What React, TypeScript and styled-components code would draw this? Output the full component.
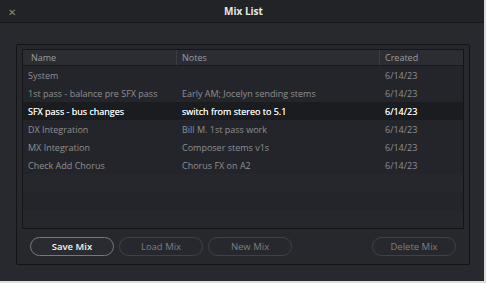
import React from 'react'
import styled, {createGlobalStyle} from 'styled-components'

const Global = createGlobalStyle`
  body {
    margin: 0;
    background: #dcdcdc;
    font-family: "Open Sans", "Noto Sans", sans-serif;
  }
`

const Window = styled.div`
  width: 484px;
  height: 281px;
  background: #28292e;
  display: flex;
  flex-direction: column;
  box-sizing: border-box;
`

const TitleBar = styled.div`
  height: 22px;
  flex: none;
  background: #222327;
  border-bottom: 1px solid #18191c;
  display: flex;
  align-items: center;
  justify-content: center;
  position: relative;
  color: #e6e6e6;
  font-size: 10px;
  font-weight: 700;
  padding-left: 3px;
`

const Close = styled.span`
  position: absolute;
  left: 8px;
  top: 5px;
  color: #8a8a8e;
  font-size: 10px;
  font-weight: 400;
`

const Body = styled.div`
  padding: 21px 14px 16px 16px;
  flex: 1;
`

const Panel = styled.div`
  width: 454px;
  height: 221px;
  box-sizing: border-box;
  border: 1px solid #131416;
  border-radius: 2px;
  background: #27282d;
  padding: 4px 5px 0 5px;
  display: flex;
  flex-direction: column;
`

const Table = styled.div`
  height: 180px;
  box-sizing: border-box;
  border: 1px solid #141517;
  background: #24252a;
  display: flex;
  flex-direction: column;
  overflow: hidden;
`

const Header = styled.div`
  display: grid;
  grid-template-columns: 153px 203px 1fr;
  height: 15px;
  background: #2c2d32;
  border-bottom: 1px solid #18191b;
  flex: none;
`

const HeadCell = styled.div<{first?: boolean}>`
  font-size: 9px;
  color: #9c9ca0;
  padding-left: ${(p) => (p.first ? 8 : 5)}px;
  line-height: 15px;
  border-left: ${(p) => (p.first ? 'none' : '1px solid #3c3d42')};
`

const Row = styled.div<{selected?: boolean; stripe?: boolean}>`
  display: grid;
  grid-template-columns: 153px 203px 1fr;
  height: 18px;
  flex: none;
  align-items: center;
  background: ${(p) => (p.selected ? '#1b1c1f' : p.stripe ? '#26272c' : '#24252a')};
  color: ${(p) => (p.selected ? '#f4f4f4' : '#8f8f93')};
  font-size: 9px;
  font-weight: 400;
  text-shadow: ${(p) => (p.selected ? '0 0 0.3px #ffffff' : 'none')};
`

const Cell = styled.div<{first?: boolean}>`
  padding-left: ${(p) => (p.first ? 5 : 6)}px;
  white-space: nowrap;
  overflow: hidden;
`

const Buttons = styled.div`
  display: flex;
  gap: 5px;
  padding: 8px 8px 0 8px;
`

const Button = styled.button<{primary?: boolean; push?: boolean}>`
  width: 84px;
  height: 19px;
  border-radius: 10px;
  border: 1px solid ${(p) => (p.primary ? '#77787c' : '#404146')};
  background: ${(p) => (p.primary ? '#2a2b30' : '#27282d')};
  color: ${(p) => (p.primary ? '#f4f4f4' : '#7e7f83')};
  font-family: "Open Sans", "Noto Sans", sans-serif;
  font-size: 9.5px;
  font-weight: ${(p) => (p.primary ? 600 : 400)};
  padding: 0;
  margin-left: ${(p) => (p.push ? 'auto' : '0')};
`

const rows = [
  {name: 'System', notes: '', created: '6/14/23'},
  {name: '1st pass - balance pre SFX pass', notes: 'Early AM; Jocelyn sending stems', created: '6/14/23'},
  {name: 'SFX pass - bus changes', notes: 'switch from stereo to 5.1', created: '6/14/23', selected: true},
  {name: 'DX Integration', notes: 'Bill M. 1st pass work', created: '6/14/23'},
  {name: 'MX Integration', notes: 'Composer stems v1s', created: '6/14/23'},
  {name: 'Check Add Chorus', notes: 'Chorus FX on A2', created: '6/14/23'},
]

function App() {
  return (
    <>
      <Global />
      <Window>
        <TitleBar>
          <Close>✕</Close>
          Mix List
        </TitleBar>
        <Body>
          <Panel>
            <Table>
              <Header>
                <HeadCell first>Name</HeadCell>
                <HeadCell>Notes</HeadCell>
                <HeadCell>Created</HeadCell>
              </Header>
              {rows.map((r, i) => (
                <Row key={i} selected={r.selected}>
                  <Cell first>{r.name}</Cell>
                  <Cell>{r.notes}</Cell>
                  <Cell>{r.created}</Cell>
                </Row>
              ))}
              {[0, 1, 2].map((i) => (
                <Row key={'e' + i} stripe={i % 2 === 0} />
              ))}
            </Table>
            <Buttons>
              <Button primary>Save Mix</Button>
              <Button>Load Mix</Button>
              <Button>New Mix</Button>
              <Button push>Delete Mix</Button>
            </Buttons>
          </Panel>
        </Body>
      </Window>
    </>
  )
}

export default App
